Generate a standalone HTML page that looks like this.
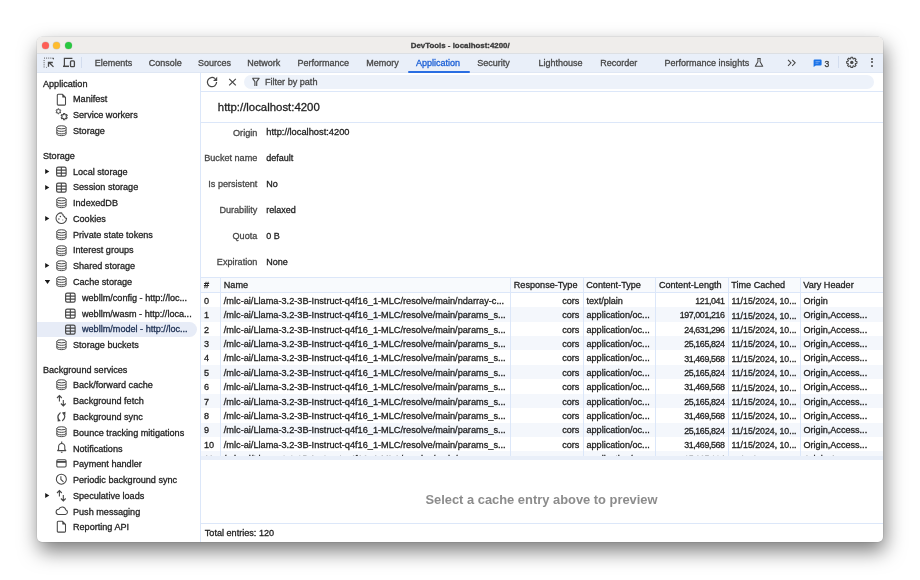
<!DOCTYPE html>
<html><head><meta charset="utf-8"><style>
html,body{margin:0;padding:0;}
body{width:920px;height:580px;background:#fff;position:relative;overflow:hidden;font-family:"Liberation Sans",sans-serif;}
#ui{position:absolute;left:0;top:0;width:920px;height:580px;will-change:transform;}
.t{position:absolute;white-space:pre;line-height:normal;-webkit-text-stroke:0.3px currentColor;}
.r{position:absolute;}
#win{position:absolute;left:37px;top:37px;width:846px;height:505px;border-radius:5px;background:#fff;box-shadow:0 0 0 0.5px rgba(0,0,0,0.1),2px 9px 20px rgba(0,0,0,0.52);}
</style></head><body>
<div id="win"></div>
<div id="ui">
<div class="r" style="left:37px;top:37px;width:846px;height:16px;background:#efedeb;border-radius:5px 5px 0 0;"></div>
<div class="r" style="left:37.00px;top:52.70px;width:846.00px;height:0.80px;background:#dcdfe3;"></div>
<div class="r" style="left:41.5px;top:41.5px;width:7px;height:7px;border-radius:50%;background:#fe5f57;box-shadow:0 0 0 0.4px rgba(0,0,0,0.15);"></div>
<div class="r" style="left:53.1px;top:41.5px;width:7px;height:7px;border-radius:50%;background:#febc2e;box-shadow:0 0 0 0.4px rgba(0,0,0,0.15);"></div>
<div class="r" style="left:64.5px;top:41.5px;width:7px;height:7px;border-radius:50%;background:#28c840;box-shadow:0 0 0 0.4px rgba(0,0,0,0.15);"></div>
<div class="t" style="left:460.20px;transform:translateX(-50%);top:40.85px;font-size:7.9px;color:#3a3a3a;font-weight:bold;">DevTools - localhost:4200/</div>
<div class="r" style="left:37.00px;top:53.50px;width:846.00px;height:18.80px;background:#e9eff9;"></div>
<div class="r" style="left:37.00px;top:72.20px;width:846.00px;height:0.80px;background:#dfe7f4;"></div>
<div class="t" style="left:94.8px;top:57.655px;font-size:9px;color:#474747;">Elements</div>
<div class="t" style="left:148.7px;top:57.655px;font-size:9px;color:#474747;">Console</div>
<div class="t" style="left:197.9px;top:57.655px;font-size:9px;color:#474747;">Sources</div>
<div class="t" style="left:247.3px;top:57.655px;font-size:9px;color:#474747;">Network</div>
<div class="t" style="left:297.5px;top:57.655px;font-size:9px;color:#474747;">Performance</div>
<div class="t" style="left:366.3px;top:57.655px;font-size:9px;color:#474747;">Memory</div>
<div class="t" style="left:415.9px;top:57.655px;font-size:9px;color:#1b5fd6;">Application</div>
<div class="t" style="left:477.2px;top:57.655px;font-size:9px;color:#474747;">Security</div>
<div class="t" style="left:538.5px;top:57.655px;font-size:9px;color:#474747;">Lighthouse</div>
<div class="t" style="left:600.3px;top:57.655px;font-size:9px;color:#474747;">Recorder</div>
<div class="t" style="left:664.6px;top:57.655px;font-size:9px;color:#474747;">Performance insights</div>
<div class="r" style="left:407.70px;top:71.00px;width:62.00px;height:1.80px;background:#2a6ee2;border-radius:1px;"></div>
<svg class="r" style="left:42.00px;top:56.00px;" width="14" height="14" viewBox="0 0 14 14"><path d="M2.1 2.1h.9 M4.2 2.1h.9 M6.3 2.1h.9 M8.4 2.1h.9 M10.5 2.1h.9v1.2 M2.1 4.2v.9 M2.1 6.3v.9 M2.1 8.4v.9 M2.1 10.5v.9 M4.2 11.4h.6" stroke="#474747" stroke-width="1"/><path d="M11.5 10.9L6.8 6.2 M6.5 10.8V6.5h4.3" fill="none" stroke="#474747" stroke-width="1.3"/></svg>
<svg class="r" style="left:62.00px;top:56.00px;" width="14" height="14" viewBox="0 0 14 14"><path d="M2.4 10V2.4h8" fill="none" stroke="#474747" stroke-width="1.2"/><path d="M1 10.3h6" stroke="#474747" stroke-width="1.5"/><rect x="8.5" y="4.9" width="3.9" height="5.8" rx="1" fill="none" stroke="#474747" stroke-width="1.3"/></svg>
<div class="r" style="left:81.30px;top:56.50px;width:0.80px;height:11.50px;background:#d3ddee;"></div>
<svg class="r" style="left:753.00px;top:56.00px;" width="12" height="12" viewBox="0 0 12 12"><path d="M4.3 2.4h3.4 M4.9 2.4v3.3L2.3 10.2h7.4L7.1 5.7V2.4" fill="none" stroke="#474747" stroke-width="1.05" stroke-linejoin="round"/></svg>
<svg class="r" style="left:786.00px;top:57.00px;" width="12" height="12" viewBox="0 0 12 12"><path d="M2 2.8l3 3-3 3 M6.2 2.8l3 3-3 3" fill="none" stroke="#474747" stroke-width="1.05"/></svg>
<svg class="r" style="left:812.00px;top:58.00px;" width="12" height="12" viewBox="0 0 12 12"><path d="M2.6 1.6h6q1 0 1 1v3.8q0 1-1 1H3.8L1.6 9V2.6q0-1 1-1z" fill="#1a73e8"/><path d="M3.5 3.6h4.4 M3.5 5.2h3" stroke="#8fb6f3" stroke-width=".7"/></svg>
<div class="t" style="left:824.50px;top:58.82px;font-size:8.6px;color:#3c3c3c;font-weight:normal;">3</div>
<div class="r" style="left:837.70px;top:56.30px;width:0.80px;height:11.40px;background:#d3ddee;"></div>
<svg class="r" style="left:845.00px;top:56.00px;" width="14" height="14" viewBox="0 0 14 14"><path d="M5.65 2.67 L5.95 1.27 L7.65 1.27 L7.95 2.67 L8.62 2.95 L9.82 2.17 L11.03 3.38 L10.25 4.58 L10.53 5.25 L11.93 5.55 L11.93 7.25 L10.53 7.55 L10.25 8.22 L11.03 9.42 L9.82 10.63 L8.62 9.85 L7.95 10.13 L7.65 11.53 L5.95 11.53 L5.65 10.13 L4.98 9.85 L3.78 10.63 L2.57 9.42 L3.35 8.22 L3.07 7.55 L1.67 7.25 L1.67 5.55 L3.07 5.25 L3.35 4.58 L2.57 3.38 L3.78 2.17 L4.98 2.95z" fill="none" stroke="#474747" stroke-width="1.1" stroke-linejoin="round"/><circle cx="6.8" cy="6.4" r="1.7" fill="#474747"/></svg>
<div class="r" style="left:871px;top:58.2px;width:2px;height:2px;border-radius:50%;background:#474747;"></div>
<div class="r" style="left:871px;top:61.4px;width:2px;height:2px;border-radius:50%;background:#474747;"></div>
<div class="r" style="left:871px;top:64.6px;width:2px;height:2px;border-radius:50%;background:#474747;"></div>
<div class="r" style="left:200.00px;top:73.00px;width:0.80px;height:469.00px;background:#dce7f9;"></div>
<div class="t" style="left:43.00px;top:78.96px;font-size:9.1px;color:#1f1f1f;font-weight:normal;">Application</div>
<svg class="r" style="left:55.00px;top:92.50px;" width="14" height="14" viewBox="0 0 14 14"><path d="M3.2 1.3h4.3l3 3v6.9q0 .9-.9 .9H3.2q-.9 0-.9-.9V2.2q0-.9 .9-.9z" fill="none" stroke="#474747" stroke-width="1.05" stroke-linejoin="round"/><path d="M7.3 1.2L10.6 4.5H7.3z" fill="#474747"/></svg>
<div class="t" style="left:73.00px;top:94.26px;font-size:9.1px;color:#1f1f1f;font-weight:normal;">Manifest</div>
<svg class="r" style="left:55.00px;top:108.27px;" width="14" height="14" viewBox="0 0 14 14"><path d="M2.84 1.80 L2.86 0.86 L3.94 0.86 L3.96 1.80 L4.41 2.06 L5.25 1.62 L5.78 2.54 L4.98 3.04 L4.98 3.56 L5.78 4.06 L5.25 4.98 L4.41 4.54 L3.96 4.80 L3.94 5.74 L2.86 5.74 L2.84 4.80 L2.39 4.54 L1.55 4.98 L1.02 4.06 L1.82 3.56 L1.82 3.04 L1.02 2.54 L1.55 1.62 L2.39 2.06z" fill="none" stroke="#474747" stroke-width="1" stroke-linejoin="round"/><path d="M8.50 6.62 L8.55 5.47 L9.85 5.47 L9.90 6.62 L10.56 7.00 L11.59 6.47 L12.24 7.59 L11.26 8.22 L11.26 8.98 L12.24 9.61 L11.59 10.73 L10.56 10.20 L9.90 10.58 L9.85 11.73 L8.55 11.73 L8.50 10.58 L7.84 10.20 L6.81 10.73 L6.16 9.61 L7.14 8.98 L7.14 8.22 L6.16 7.59 L6.81 6.47 L7.84 7.00z" fill="none" stroke="#474747" stroke-width="1.05" stroke-linejoin="round"/></svg>
<div class="t" style="left:73.00px;top:110.03px;font-size:9.1px;color:#1f1f1f;font-weight:normal;">Service workers</div>
<svg class="r" style="left:55.00px;top:124.04px;" width="14" height="14" viewBox="0 0 14 14"><ellipse cx="6.45" cy="3.3" rx="4.6" ry="1.55" fill="none" stroke="#474747" stroke-width="1"/><path d="M1.85 3.3v6.8c0 .85 2.05 1.55 4.6 1.55s4.6-.7 4.6-1.55V3.3 M1.85 5.8c0 .85 2.05 1.55 4.6 1.55s4.6-.7 4.6-1.55 M1.85 8.3c0 .85 2.05 1.55 4.6 1.55s4.6-.7 4.6-1.55" fill="none" stroke="#474747" stroke-width="1"/></svg>
<div class="t" style="left:73.00px;top:125.80px;font-size:9.1px;color:#1f1f1f;font-weight:normal;">Storage</div>
<div class="t" style="left:43.00px;top:150.76px;font-size:9.1px;color:#1f1f1f;font-weight:normal;">Storage</div>
<svg class="r" style="left:45.00px;top:167.87px;" width="6" height="8" viewBox="0 0 6 8"><path d="M0.2 1.0L4.3 3.55 0.2 6.1z" fill="#1a1a1a"/></svg>
<svg class="r" style="left:55.00px;top:164.87px;" width="14" height="14" viewBox="0 0 14 14"><rect x="1.6" y="2.1" width="9.5" height="9.0" rx="1.6" fill="none" stroke="#474747" stroke-width="1.15"/><path d="M1.6 5.1h9.5 M1.6 8.1h9.5 M6.35 2.1v9.0" stroke="#474747" stroke-width="1.1"/></svg>
<div class="t" style="left:73.00px;top:166.63px;font-size:9.1px;color:#1f1f1f;font-weight:normal;">Local storage</div>
<svg class="r" style="left:45.00px;top:183.64px;" width="6" height="8" viewBox="0 0 6 8"><path d="M0.2 1.0L4.3 3.55 0.2 6.1z" fill="#1a1a1a"/></svg>
<svg class="r" style="left:55.00px;top:180.64px;" width="14" height="14" viewBox="0 0 14 14"><rect x="1.6" y="2.1" width="9.5" height="9.0" rx="1.6" fill="none" stroke="#474747" stroke-width="1.15"/><path d="M1.6 5.1h9.5 M1.6 8.1h9.5 M6.35 2.1v9.0" stroke="#474747" stroke-width="1.1"/></svg>
<div class="t" style="left:73.00px;top:182.40px;font-size:9.1px;color:#1f1f1f;font-weight:normal;">Session storage</div>
<svg class="r" style="left:55.00px;top:196.41px;" width="14" height="14" viewBox="0 0 14 14"><ellipse cx="6.45" cy="3.3" rx="4.6" ry="1.55" fill="none" stroke="#474747" stroke-width="1"/><path d="M1.85 3.3v6.8c0 .85 2.05 1.55 4.6 1.55s4.6-.7 4.6-1.55V3.3 M1.85 5.8c0 .85 2.05 1.55 4.6 1.55s4.6-.7 4.6-1.55 M1.85 8.3c0 .85 2.05 1.55 4.6 1.55s4.6-.7 4.6-1.55" fill="none" stroke="#474747" stroke-width="1"/></svg>
<div class="t" style="left:73.00px;top:198.17px;font-size:9.1px;color:#1f1f1f;font-weight:normal;">IndexedDB</div>
<svg class="r" style="left:45.00px;top:215.18px;" width="6" height="8" viewBox="0 0 6 8"><path d="M0.2 1.0L4.3 3.55 0.2 6.1z" fill="#1a1a1a"/></svg>
<svg class="r" style="left:55.00px;top:212.18px;" width="14" height="14" viewBox="0 0 14 14"><path d="M6.8 0.9A5.3 5.3 0 1 0 11.6 6.3 1.7 1.7 0 0 1 9.6 4.5 1.7 1.7 0 0 1 8 2.6 1.6 1.6 0 0 1 6.8 0.9z" fill="none" stroke="#474747" stroke-width="1.05" stroke-linejoin="round"/><circle cx="5.4" cy="4.4" r=".75" fill="#474747"/><circle cx="3.9" cy="7.1" r=".75" fill="#474747"/><circle cx="7.8" cy="7.9" r=".6" fill="#8a8a8a"/></svg>
<div class="t" style="left:73.00px;top:213.94px;font-size:9.1px;color:#1f1f1f;font-weight:normal;">Cookies</div>
<svg class="r" style="left:55.00px;top:227.95px;" width="14" height="14" viewBox="0 0 14 14"><ellipse cx="6.45" cy="3.3" rx="4.6" ry="1.55" fill="none" stroke="#474747" stroke-width="1"/><path d="M1.85 3.3v6.8c0 .85 2.05 1.55 4.6 1.55s4.6-.7 4.6-1.55V3.3 M1.85 5.8c0 .85 2.05 1.55 4.6 1.55s4.6-.7 4.6-1.55 M1.85 8.3c0 .85 2.05 1.55 4.6 1.55s4.6-.7 4.6-1.55" fill="none" stroke="#474747" stroke-width="1"/></svg>
<div class="t" style="left:73.00px;top:229.71px;font-size:9.1px;color:#1f1f1f;font-weight:normal;">Private state tokens</div>
<svg class="r" style="left:55.00px;top:243.72px;" width="14" height="14" viewBox="0 0 14 14"><ellipse cx="6.45" cy="3.3" rx="4.6" ry="1.55" fill="none" stroke="#474747" stroke-width="1"/><path d="M1.85 3.3v6.8c0 .85 2.05 1.55 4.6 1.55s4.6-.7 4.6-1.55V3.3 M1.85 5.8c0 .85 2.05 1.55 4.6 1.55s4.6-.7 4.6-1.55 M1.85 8.3c0 .85 2.05 1.55 4.6 1.55s4.6-.7 4.6-1.55" fill="none" stroke="#474747" stroke-width="1"/></svg>
<div class="t" style="left:73.00px;top:245.48px;font-size:9.1px;color:#1f1f1f;font-weight:normal;">Interest groups</div>
<svg class="r" style="left:45.00px;top:262.49px;" width="6" height="8" viewBox="0 0 6 8"><path d="M0.2 1.0L4.3 3.55 0.2 6.1z" fill="#1a1a1a"/></svg>
<svg class="r" style="left:55.00px;top:259.49px;" width="14" height="14" viewBox="0 0 14 14"><ellipse cx="6.45" cy="3.3" rx="4.6" ry="1.55" fill="none" stroke="#474747" stroke-width="1"/><path d="M1.85 3.3v6.8c0 .85 2.05 1.55 4.6 1.55s4.6-.7 4.6-1.55V3.3 M1.85 5.8c0 .85 2.05 1.55 4.6 1.55s4.6-.7 4.6-1.55 M1.85 8.3c0 .85 2.05 1.55 4.6 1.55s4.6-.7 4.6-1.55" fill="none" stroke="#474747" stroke-width="1"/></svg>
<div class="t" style="left:73.00px;top:261.25px;font-size:9.1px;color:#1f1f1f;font-weight:normal;">Shared storage</div>
<svg class="r" style="left:45.00px;top:278.26px;" width="6" height="8" viewBox="0 0 6 8"><path d="M-0.2 1.9L5.2 1.9 2.5 6.1z" fill="#1a1a1a"/></svg>
<svg class="r" style="left:55.00px;top:275.26px;" width="14" height="14" viewBox="0 0 14 14"><ellipse cx="6.45" cy="3.3" rx="4.6" ry="1.55" fill="none" stroke="#474747" stroke-width="1"/><path d="M1.85 3.3v6.8c0 .85 2.05 1.55 4.6 1.55s4.6-.7 4.6-1.55V3.3 M1.85 5.8c0 .85 2.05 1.55 4.6 1.55s4.6-.7 4.6-1.55 M1.85 8.3c0 .85 2.05 1.55 4.6 1.55s4.6-.7 4.6-1.55" fill="none" stroke="#474747" stroke-width="1"/></svg>
<div class="t" style="left:73.00px;top:277.02px;font-size:9.1px;color:#1f1f1f;font-weight:normal;">Cache storage</div>
<svg class="r" style="left:64.00px;top:291.03px;" width="14" height="14" viewBox="0 0 14 14"><rect x="1.6" y="2.1" width="9.5" height="9.0" rx="1.6" fill="none" stroke="#474747" stroke-width="1.15"/><path d="M1.6 5.1h9.5 M1.6 8.1h9.5 M6.35 2.1v9.0" stroke="#474747" stroke-width="1.1"/></svg>
<div class="t" style="left:82.00px;top:292.79px;font-size:9.1px;color:#1f1f1f;font-weight:normal;">webllm/config - http://loc...</div>
<svg class="r" style="left:64.00px;top:306.80px;" width="14" height="14" viewBox="0 0 14 14"><rect x="1.6" y="2.1" width="9.5" height="9.0" rx="1.6" fill="none" stroke="#474747" stroke-width="1.15"/><path d="M1.6 5.1h9.5 M1.6 8.1h9.5 M6.35 2.1v9.0" stroke="#474747" stroke-width="1.1"/></svg>
<div class="t" style="left:82.00px;top:308.56px;font-size:9.1px;color:#1f1f1f;font-weight:normal;">webllm/wasm - http://loca...</div>
<div class="r" style="left:37px;top:322.07px;width:160px;height:15.2px;background:#e7ecf7;border-radius:0 7.6px 7.6px 0;"></div>
<svg class="r" style="left:64.00px;top:322.57px;" width="14" height="14" viewBox="0 0 14 14"><rect x="1.6" y="2.1" width="9.5" height="9.0" rx="1.6" fill="none" stroke="#474747" stroke-width="1.15"/><path d="M1.6 5.1h9.5 M1.6 8.1h9.5 M6.35 2.1v9.0" stroke="#474747" stroke-width="1.1"/></svg>
<div class="t" style="left:82.00px;top:324.33px;font-size:9.1px;color:#1c2f52;font-weight:normal;">webllm/model - http://loc...</div>
<svg class="r" style="left:55.00px;top:338.34px;" width="14" height="14" viewBox="0 0 14 14"><ellipse cx="6.45" cy="3.3" rx="4.6" ry="1.55" fill="none" stroke="#474747" stroke-width="1"/><path d="M1.85 3.3v6.8c0 .85 2.05 1.55 4.6 1.55s4.6-.7 4.6-1.55V3.3 M1.85 5.8c0 .85 2.05 1.55 4.6 1.55s4.6-.7 4.6-1.55 M1.85 8.3c0 .85 2.05 1.55 4.6 1.55s4.6-.7 4.6-1.55" fill="none" stroke="#474747" stroke-width="1"/></svg>
<div class="t" style="left:73.00px;top:340.10px;font-size:9.1px;color:#1f1f1f;font-weight:normal;">Storage buckets</div>
<div class="t" style="left:43.00px;top:364.70px;font-size:9.1px;color:#1f1f1f;font-weight:normal;">Background services</div>
<svg class="r" style="left:55.00px;top:378.11px;" width="14" height="14" viewBox="0 0 14 14"><ellipse cx="6.45" cy="3.3" rx="4.6" ry="1.55" fill="none" stroke="#474747" stroke-width="1"/><path d="M1.85 3.3v6.8c0 .85 2.05 1.55 4.6 1.55s4.6-.7 4.6-1.55V3.3 M1.85 5.8c0 .85 2.05 1.55 4.6 1.55s4.6-.7 4.6-1.55 M1.85 8.3c0 .85 2.05 1.55 4.6 1.55s4.6-.7 4.6-1.55" fill="none" stroke="#474747" stroke-width="1"/></svg>
<div class="t" style="left:73.00px;top:380.47px;font-size:9.1px;color:#1f1f1f;font-weight:normal;">Back/forward cache</div>
<svg class="r" style="left:55.00px;top:393.88px;" width="14" height="14" viewBox="0 0 14 14"><path d="M4.4 7.6V1.6 M2 4l2.4-2.4L6.8 4 M8.3 5.9v6 M5.9 9.5l2.4 2.4 2.4-2.4" fill="none" stroke="#474747" stroke-width="1.1"/></svg>
<div class="t" style="left:73.00px;top:396.24px;font-size:9.1px;color:#1f1f1f;font-weight:normal;">Background fetch</div>
<svg class="r" style="left:55.00px;top:409.65px;" width="14" height="14" viewBox="0 0 14 14"><path d="M5.2 2.9Q1.2 6.6 4.2 10.2 M8.0 3.1Q11.8 6.8 7.6 10.5" fill="none" stroke="#474747" stroke-width="1.2" stroke-linecap="round"/><path d="M2.8 8.4L6.0 10.9 2.6 11.6z M10.3 5.0L7.0 2.4 10.5 1.8z" fill="#474747"/></svg>
<div class="t" style="left:73.00px;top:412.01px;font-size:9.1px;color:#1f1f1f;font-weight:normal;">Background sync</div>
<svg class="r" style="left:55.00px;top:425.42px;" width="14" height="14" viewBox="0 0 14 14"><ellipse cx="6.45" cy="3.3" rx="4.6" ry="1.55" fill="none" stroke="#474747" stroke-width="1"/><path d="M1.85 3.3v6.8c0 .85 2.05 1.55 4.6 1.55s4.6-.7 4.6-1.55V3.3 M1.85 5.8c0 .85 2.05 1.55 4.6 1.55s4.6-.7 4.6-1.55 M1.85 8.3c0 .85 2.05 1.55 4.6 1.55s4.6-.7 4.6-1.55" fill="none" stroke="#474747" stroke-width="1"/></svg>
<div class="t" style="left:73.00px;top:427.78px;font-size:9.1px;color:#1f1f1f;font-weight:normal;">Bounce tracking mitigations</div>
<svg class="r" style="left:55.00px;top:441.19px;" width="14" height="14" viewBox="0 0 14 14"><path d="M2.6 9.6h8.2l-1-1.2V5.5a3.1 3.1 0 0 0-6.2 0v2.9z" fill="none" stroke="#474747" stroke-width="1.05" stroke-linejoin="round"/><path d="M6.7 0.6v1.3 M5.9 11.3h1.6" stroke="#474747" stroke-width="1.1"/></svg>
<div class="t" style="left:73.00px;top:443.55px;font-size:9.1px;color:#1f1f1f;font-weight:normal;">Notifications</div>
<svg class="r" style="left:55.00px;top:456.96px;" width="14" height="14" viewBox="0 0 14 14"><rect x="1.8" y="2.8" width="9.3" height="7.2" rx="1.2" fill="none" stroke="#474747" stroke-width="1.05"/><path d="M1.8 4.9h9.3" stroke="#474747" stroke-width="1.8"/></svg>
<div class="t" style="left:73.00px;top:459.32px;font-size:9.1px;color:#1f1f1f;font-weight:normal;">Payment handler</div>
<svg class="r" style="left:55.00px;top:472.73px;" width="14" height="14" viewBox="0 0 14 14"><circle cx="6.35" cy="6.2" r="5.0" fill="none" stroke="#474747" stroke-width="1.05"/><path d="M5.9 3.3v3.2l2.6 2.4" fill="none" stroke="#474747" stroke-width="1.05"/></svg>
<div class="t" style="left:73.00px;top:475.09px;font-size:9.1px;color:#1f1f1f;font-weight:normal;">Periodic background sync</div>
<svg class="r" style="left:45.00px;top:492.10px;" width="6" height="8" viewBox="0 0 6 8"><path d="M0.2 1.0L4.3 3.55 0.2 6.1z" fill="#1a1a1a"/></svg>
<svg class="r" style="left:55.00px;top:488.50px;" width="14" height="14" viewBox="0 0 14 14"><path d="M4.4 7.6V1.6 M2 4l2.4-2.4L6.8 4 M8.3 5.9v6 M5.9 9.5l2.4 2.4 2.4-2.4" fill="none" stroke="#474747" stroke-width="1.1"/></svg>
<div class="t" style="left:73.00px;top:490.86px;font-size:9.1px;color:#1f1f1f;font-weight:normal;">Speculative loads</div>
<svg class="r" style="left:55.00px;top:504.27px;" width="14" height="14" viewBox="0 0 14 14"><path d="M3 10.4h7.4a2.3 2.3 0 0 0 .4-4.5 3.7 3.7 0 0 0-7-.6A2.6 2.6 0 0 0 3 10.4z" fill="none" stroke="#474747" stroke-width="1.05" stroke-linejoin="round"/></svg>
<div class="t" style="left:73.00px;top:506.63px;font-size:9.1px;color:#1f1f1f;font-weight:normal;">Push messaging</div>
<svg class="r" style="left:55.00px;top:520.04px;" width="14" height="14" viewBox="0 0 14 14"><path d="M3.2 1.3h4.3l3 3v6.9q0 .9-.9 .9H3.2q-.9 0-.9-.9V2.2q0-.9 .9-.9z" fill="none" stroke="#474747" stroke-width="1.05" stroke-linejoin="round"/><path d="M7.3 1.2L10.6 4.5H7.3z" fill="#474747"/></svg>
<div class="t" style="left:73.00px;top:522.40px;font-size:9.1px;color:#1f1f1f;font-weight:normal;">Reporting API</div>
<div class="r" style="left:200.80px;top:90.60px;width:682.20px;height:0.80px;background:#dce7f9;"></div>
<svg class="r" style="left:205.00px;top:75.00px;" width="14" height="14" viewBox="0 0 14 14"><path d="M11.6 7.1A4.6 4.6 0 1 1 10 3.6" fill="none" stroke="#474747" stroke-width="1.25"/><path d="M12.2 1.8v4.1H8.1z" fill="#474747"/></svg>
<svg class="r" style="left:226.00px;top:75.00px;" width="14" height="14" viewBox="0 0 14 14"><path d="M3.2 3.8l6.6 6.6 M9.8 3.8l-6.6 6.6" stroke="#474747" stroke-width="1.2"/></svg>
<div class="r" style="left:243.8px;top:74.9px;width:630px;height:14.2px;border-radius:7.1px;background:#edf2fa;"></div>
<svg class="r" style="left:250.00px;top:75.00px;" width="14" height="14" viewBox="0 0 14 14"><path d="M2.4 3.2h6.8L6.7 6.6v4.4 M2.4 3.2L4.9 6.6v4.4" fill="none" stroke="#474747" stroke-width="1.1" stroke-linejoin="round"/></svg>
<div class="t" style="left:264.90px;top:76.76px;font-size:9.1px;color:#474747;font-weight:normal;">Filter by path</div>
<div class="t" style="left:217.80px;top:100.68px;font-size:11.4px;color:#1f1f1f;font-weight:normal;">http://localhost:4200</div>
<div class="r" style="left:200.80px;top:121.90px;width:682.20px;height:0.80px;background:#dce7f9;"></div>
<div class="t" style="right:662.70px;top:127.56px;font-size:9.1px;color:#474747;font-weight:normal;">Origin</div>
<div class="t" style="left:266.30px;top:127.38px;font-size:9.3px;color:#1f1f1f;font-weight:normal;">http://localhost:4200</div>
<div class="t" style="right:662.70px;top:153.36px;font-size:9.1px;color:#474747;font-weight:normal;">Bucket name</div>
<div class="t" style="left:266.30px;top:153.46px;font-size:9px;color:#1f1f1f;font-weight:normal;">default</div>
<div class="t" style="right:662.70px;top:179.16px;font-size:9.1px;color:#474747;font-weight:normal;">Is persistent</div>
<div class="t" style="left:266.30px;top:179.25px;font-size:9px;color:#1f1f1f;font-weight:normal;">No</div>
<div class="t" style="right:662.70px;top:204.96px;font-size:9.1px;color:#474747;font-weight:normal;">Durability</div>
<div class="t" style="left:266.30px;top:205.06px;font-size:9px;color:#1f1f1f;font-weight:normal;">relaxed</div>
<div class="t" style="right:662.70px;top:230.76px;font-size:9.1px;color:#474747;font-weight:normal;">Quota</div>
<div class="t" style="left:266.30px;top:230.85px;font-size:9px;color:#1f1f1f;font-weight:normal;">0 B</div>
<div class="t" style="right:662.70px;top:256.56px;font-size:9.1px;color:#474747;font-weight:normal;">Expiration</div>
<div class="t" style="left:266.30px;top:256.66px;font-size:9px;color:#1f1f1f;font-weight:normal;">None</div>
<div class="r" style="left:200.80px;top:276.90px;width:682.20px;height:0.80px;background:#dce7f9;"></div>
<div class="r" style="left:200.80px;top:277.70px;width:682.20px;height:14.40px;background:#f8fafd;"></div>
<div class="r" style="left:200.80px;top:292.10px;width:682.20px;height:0.80px;background:#dce7f9;"></div>
<div class="t" style="left:204.10px;top:280.06px;font-size:9.1px;color:#1f1f1f;font-weight:normal;">#</div>
<div class="t" style="left:223.80px;top:280.06px;font-size:9.1px;color:#1f1f1f;font-weight:normal;">Name</div>
<div class="t" style="left:513.80px;top:280.06px;font-size:9.1px;color:#1f1f1f;font-weight:normal;">Response-Type</div>
<div class="t" style="left:586.30px;top:280.06px;font-size:9.1px;color:#1f1f1f;font-weight:normal;">Content-Type</div>
<div class="t" style="left:658.90px;top:280.06px;font-size:9.1px;color:#1f1f1f;font-weight:normal;">Content-Length</div>
<div class="t" style="left:731.30px;top:280.06px;font-size:9.1px;color:#1f1f1f;font-weight:normal;">Time Cached</div>
<div class="t" style="left:803.30px;top:280.06px;font-size:9.1px;color:#1f1f1f;font-weight:normal;">Vary Header</div>
<div class="r" style="left:200.80px;top:307.30px;width:682.20px;height:14.40px;background:#f4f7fc;"></div>
<div class="r" style="left:200.80px;top:336.10px;width:682.20px;height:14.40px;background:#f4f7fc;"></div>
<div class="r" style="left:200.80px;top:364.90px;width:682.20px;height:14.40px;background:#f4f7fc;"></div>
<div class="r" style="left:200.80px;top:393.70px;width:682.20px;height:14.40px;background:#f4f7fc;"></div>
<div class="r" style="left:200.80px;top:422.50px;width:682.20px;height:14.40px;background:#f4f7fc;"></div>
<div class="r" style="left:200.80px;top:451.30px;width:682.20px;height:4.60px;background:#f4f7fc;"></div>
<div class="r" style="left:220.10px;top:277.70px;width:0.80px;height:178.20px;background:#dce7f9;"></div>
<div class="r" style="left:510.10px;top:277.70px;width:0.80px;height:178.20px;background:#dce7f9;"></div>
<div class="r" style="left:582.60px;top:277.70px;width:0.80px;height:178.20px;background:#dce7f9;"></div>
<div class="r" style="left:655.20px;top:277.70px;width:0.80px;height:178.20px;background:#dce7f9;"></div>
<div class="r" style="left:727.60px;top:277.70px;width:0.80px;height:178.20px;background:#dce7f9;"></div>
<div class="r" style="left:799.60px;top:277.70px;width:0.80px;height:178.20px;background:#dce7f9;"></div>
<div class="t" style="left:204.00px;top:295.86px;font-size:9.1px;color:#1f1f1f;font-weight:normal;">0</div>
<div class="t" style="left:223.80px;top:295.77px;font-size:9.2px;color:#1f1f1f;font-weight:normal;">/mlc-ai/Llama-3.2-3B-Instruct-q4f16_1-MLC/resolve/main/ndarray-c...</div>
<div class="t" style="right:340.70px;top:295.86px;font-size:9.1px;color:#1f1f1f;font-weight:normal;">cors</div>
<div class="t" style="left:586.50px;top:295.86px;font-size:9.1px;color:#1f1f1f;font-weight:normal;">text/plain</div>
<div class="t" style="right:195.40px;top:296.05px;font-size:8.9px;color:#1f1f1f;font-weight:normal;letter-spacing:-0.4px;">121,041</div>
<div class="t" style="left:731.50px;top:296.18px;font-size:8.75px;color:#1f1f1f;font-weight:normal;">11/15/2024, 10...</div>
<div class="t" style="left:803.50px;top:295.86px;font-size:9.1px;color:#1f1f1f;font-weight:normal;">Origin</div>
<div class="t" style="left:204.00px;top:310.26px;font-size:9.1px;color:#1f1f1f;font-weight:normal;">1</div>
<div class="t" style="left:223.80px;top:310.17px;font-size:9.2px;color:#1f1f1f;font-weight:normal;">/mlc-ai/Llama-3.2-3B-Instruct-q4f16_1-MLC/resolve/main/params_s...</div>
<div class="t" style="right:340.70px;top:310.26px;font-size:9.1px;color:#1f1f1f;font-weight:normal;">cors</div>
<div class="t" style="left:586.50px;top:310.26px;font-size:9.1px;color:#1f1f1f;font-weight:normal;">application/oc...</div>
<div class="t" style="right:195.40px;top:310.45px;font-size:8.9px;color:#1f1f1f;font-weight:normal;letter-spacing:-0.4px;">197,001,216</div>
<div class="t" style="left:731.50px;top:310.58px;font-size:8.75px;color:#1f1f1f;font-weight:normal;">11/15/2024, 10...</div>
<div class="t" style="left:803.50px;top:310.26px;font-size:9.1px;color:#1f1f1f;font-weight:normal;">Origin,Access...</div>
<div class="t" style="left:204.00px;top:324.66px;font-size:9.1px;color:#1f1f1f;font-weight:normal;">2</div>
<div class="t" style="left:223.80px;top:324.57px;font-size:9.2px;color:#1f1f1f;font-weight:normal;">/mlc-ai/Llama-3.2-3B-Instruct-q4f16_1-MLC/resolve/main/params_s...</div>
<div class="t" style="right:340.70px;top:324.66px;font-size:9.1px;color:#1f1f1f;font-weight:normal;">cors</div>
<div class="t" style="left:586.50px;top:324.66px;font-size:9.1px;color:#1f1f1f;font-weight:normal;">application/oc...</div>
<div class="t" style="right:195.40px;top:324.85px;font-size:8.9px;color:#1f1f1f;font-weight:normal;letter-spacing:-0.4px;">24,631,296</div>
<div class="t" style="left:731.50px;top:324.98px;font-size:8.75px;color:#1f1f1f;font-weight:normal;">11/15/2024, 10...</div>
<div class="t" style="left:803.50px;top:324.66px;font-size:9.1px;color:#1f1f1f;font-weight:normal;">Origin,Access...</div>
<div class="t" style="left:204.00px;top:339.06px;font-size:9.1px;color:#1f1f1f;font-weight:normal;">3</div>
<div class="t" style="left:223.80px;top:338.97px;font-size:9.2px;color:#1f1f1f;font-weight:normal;">/mlc-ai/Llama-3.2-3B-Instruct-q4f16_1-MLC/resolve/main/params_s...</div>
<div class="t" style="right:340.70px;top:339.06px;font-size:9.1px;color:#1f1f1f;font-weight:normal;">cors</div>
<div class="t" style="left:586.50px;top:339.06px;font-size:9.1px;color:#1f1f1f;font-weight:normal;">application/oc...</div>
<div class="t" style="right:195.40px;top:339.25px;font-size:8.9px;color:#1f1f1f;font-weight:normal;letter-spacing:-0.4px;">25,165,824</div>
<div class="t" style="left:731.50px;top:339.38px;font-size:8.75px;color:#1f1f1f;font-weight:normal;">11/15/2024, 10...</div>
<div class="t" style="left:803.50px;top:339.06px;font-size:9.1px;color:#1f1f1f;font-weight:normal;">Origin,Access...</div>
<div class="t" style="left:204.00px;top:353.46px;font-size:9.1px;color:#1f1f1f;font-weight:normal;">4</div>
<div class="t" style="left:223.80px;top:353.37px;font-size:9.2px;color:#1f1f1f;font-weight:normal;">/mlc-ai/Llama-3.2-3B-Instruct-q4f16_1-MLC/resolve/main/params_s...</div>
<div class="t" style="right:340.70px;top:353.46px;font-size:9.1px;color:#1f1f1f;font-weight:normal;">cors</div>
<div class="t" style="left:586.50px;top:353.46px;font-size:9.1px;color:#1f1f1f;font-weight:normal;">application/oc...</div>
<div class="t" style="right:195.40px;top:353.65px;font-size:8.9px;color:#1f1f1f;font-weight:normal;letter-spacing:-0.4px;">31,469,568</div>
<div class="t" style="left:731.50px;top:353.78px;font-size:8.75px;color:#1f1f1f;font-weight:normal;">11/15/2024, 10...</div>
<div class="t" style="left:803.50px;top:353.46px;font-size:9.1px;color:#1f1f1f;font-weight:normal;">Origin,Access...</div>
<div class="t" style="left:204.00px;top:367.86px;font-size:9.1px;color:#1f1f1f;font-weight:normal;">5</div>
<div class="t" style="left:223.80px;top:367.77px;font-size:9.2px;color:#1f1f1f;font-weight:normal;">/mlc-ai/Llama-3.2-3B-Instruct-q4f16_1-MLC/resolve/main/params_s...</div>
<div class="t" style="right:340.70px;top:367.86px;font-size:9.1px;color:#1f1f1f;font-weight:normal;">cors</div>
<div class="t" style="left:586.50px;top:367.86px;font-size:9.1px;color:#1f1f1f;font-weight:normal;">application/oc...</div>
<div class="t" style="right:195.40px;top:368.05px;font-size:8.9px;color:#1f1f1f;font-weight:normal;letter-spacing:-0.4px;">25,165,824</div>
<div class="t" style="left:731.50px;top:368.18px;font-size:8.75px;color:#1f1f1f;font-weight:normal;">11/15/2024, 10...</div>
<div class="t" style="left:803.50px;top:367.86px;font-size:9.1px;color:#1f1f1f;font-weight:normal;">Origin,Access...</div>
<div class="t" style="left:204.00px;top:382.26px;font-size:9.1px;color:#1f1f1f;font-weight:normal;">6</div>
<div class="t" style="left:223.80px;top:382.17px;font-size:9.2px;color:#1f1f1f;font-weight:normal;">/mlc-ai/Llama-3.2-3B-Instruct-q4f16_1-MLC/resolve/main/params_s...</div>
<div class="t" style="right:340.70px;top:382.26px;font-size:9.1px;color:#1f1f1f;font-weight:normal;">cors</div>
<div class="t" style="left:586.50px;top:382.26px;font-size:9.1px;color:#1f1f1f;font-weight:normal;">application/oc...</div>
<div class="t" style="right:195.40px;top:382.45px;font-size:8.9px;color:#1f1f1f;font-weight:normal;letter-spacing:-0.4px;">31,469,568</div>
<div class="t" style="left:731.50px;top:382.58px;font-size:8.75px;color:#1f1f1f;font-weight:normal;">11/15/2024, 10...</div>
<div class="t" style="left:803.50px;top:382.26px;font-size:9.1px;color:#1f1f1f;font-weight:normal;">Origin,Access...</div>
<div class="t" style="left:204.00px;top:396.66px;font-size:9.1px;color:#1f1f1f;font-weight:normal;">7</div>
<div class="t" style="left:223.80px;top:396.57px;font-size:9.2px;color:#1f1f1f;font-weight:normal;">/mlc-ai/Llama-3.2-3B-Instruct-q4f16_1-MLC/resolve/main/params_s...</div>
<div class="t" style="right:340.70px;top:396.66px;font-size:9.1px;color:#1f1f1f;font-weight:normal;">cors</div>
<div class="t" style="left:586.50px;top:396.66px;font-size:9.1px;color:#1f1f1f;font-weight:normal;">application/oc...</div>
<div class="t" style="right:195.40px;top:396.85px;font-size:8.9px;color:#1f1f1f;font-weight:normal;letter-spacing:-0.4px;">25,165,824</div>
<div class="t" style="left:731.50px;top:396.98px;font-size:8.75px;color:#1f1f1f;font-weight:normal;">11/15/2024, 10...</div>
<div class="t" style="left:803.50px;top:396.66px;font-size:9.1px;color:#1f1f1f;font-weight:normal;">Origin,Access...</div>
<div class="t" style="left:204.00px;top:411.06px;font-size:9.1px;color:#1f1f1f;font-weight:normal;">8</div>
<div class="t" style="left:223.80px;top:410.97px;font-size:9.2px;color:#1f1f1f;font-weight:normal;">/mlc-ai/Llama-3.2-3B-Instruct-q4f16_1-MLC/resolve/main/params_s...</div>
<div class="t" style="right:340.70px;top:411.06px;font-size:9.1px;color:#1f1f1f;font-weight:normal;">cors</div>
<div class="t" style="left:586.50px;top:411.06px;font-size:9.1px;color:#1f1f1f;font-weight:normal;">application/oc...</div>
<div class="t" style="right:195.40px;top:411.25px;font-size:8.9px;color:#1f1f1f;font-weight:normal;letter-spacing:-0.4px;">31,469,568</div>
<div class="t" style="left:731.50px;top:411.38px;font-size:8.75px;color:#1f1f1f;font-weight:normal;">11/15/2024, 10...</div>
<div class="t" style="left:803.50px;top:411.06px;font-size:9.1px;color:#1f1f1f;font-weight:normal;">Origin,Access...</div>
<div class="t" style="left:204.00px;top:425.46px;font-size:9.1px;color:#1f1f1f;font-weight:normal;">9</div>
<div class="t" style="left:223.80px;top:425.37px;font-size:9.2px;color:#1f1f1f;font-weight:normal;">/mlc-ai/Llama-3.2-3B-Instruct-q4f16_1-MLC/resolve/main/params_s...</div>
<div class="t" style="right:340.70px;top:425.46px;font-size:9.1px;color:#1f1f1f;font-weight:normal;">cors</div>
<div class="t" style="left:586.50px;top:425.46px;font-size:9.1px;color:#1f1f1f;font-weight:normal;">application/oc...</div>
<div class="t" style="right:195.40px;top:425.65px;font-size:8.9px;color:#1f1f1f;font-weight:normal;letter-spacing:-0.4px;">25,165,824</div>
<div class="t" style="left:731.50px;top:425.78px;font-size:8.75px;color:#1f1f1f;font-weight:normal;">11/15/2024, 10...</div>
<div class="t" style="left:803.50px;top:425.46px;font-size:9.1px;color:#1f1f1f;font-weight:normal;">Origin,Access...</div>
<div class="t" style="left:204.00px;top:439.86px;font-size:9.1px;color:#1f1f1f;font-weight:normal;">10</div>
<div class="t" style="left:223.80px;top:439.77px;font-size:9.2px;color:#1f1f1f;font-weight:normal;">/mlc-ai/Llama-3.2-3B-Instruct-q4f16_1-MLC/resolve/main/params_s...</div>
<div class="t" style="right:340.70px;top:439.86px;font-size:9.1px;color:#1f1f1f;font-weight:normal;">cors</div>
<div class="t" style="left:586.50px;top:439.86px;font-size:9.1px;color:#1f1f1f;font-weight:normal;">application/oc...</div>
<div class="t" style="right:195.40px;top:440.05px;font-size:8.9px;color:#1f1f1f;font-weight:normal;letter-spacing:-0.4px;">31,469,568</div>
<div class="t" style="left:731.50px;top:440.18px;font-size:8.75px;color:#1f1f1f;font-weight:normal;">11/15/2024, 10...</div>
<div class="t" style="left:803.50px;top:439.86px;font-size:9.1px;color:#1f1f1f;font-weight:normal;">Origin,Access...</div>
<div class="t" style="left:204.00px;top:454.26px;font-size:9.1px;color:#1f1f1f;font-weight:normal;">11</div>
<div class="t" style="left:223.80px;top:454.17px;font-size:9.2px;color:#1f1f1f;font-weight:normal;">/mlc-ai/Llama-3.2-3B-Instruct-q4f16_1-MLC/resolve/main/params_s...</div>
<div class="t" style="right:340.70px;top:454.26px;font-size:9.1px;color:#1f1f1f;font-weight:normal;">cors</div>
<div class="t" style="left:586.50px;top:454.26px;font-size:9.1px;color:#1f1f1f;font-weight:normal;">application/oc...</div>
<div class="t" style="right:195.40px;top:454.45px;font-size:8.9px;color:#1f1f1f;font-weight:normal;letter-spacing:-0.4px;">25,165,824</div>
<div class="t" style="left:731.50px;top:454.58px;font-size:8.75px;color:#1f1f1f;font-weight:normal;">11/15/2024, 10...</div>
<div class="t" style="left:803.50px;top:454.26px;font-size:9.1px;color:#1f1f1f;font-weight:normal;">Origin,Access...</div>
<div class="r" style="left:200.80px;top:455.90px;width:682.20px;height:67.10px;background:#fff;"></div>
<div class="r" style="left:200.80px;top:455.90px;width:682.20px;height:3.80px;background:#e9eff9;"></div>
<div class="t" style="left:541.50px;transform:translateX(-50%);top:491.93px;font-size:12.9px;color:#8c8c8c;font-weight:bold;-webkit-text-stroke:0;">Select a cache entry above to preview</div>
<div class="r" style="left:200.80px;top:522.60px;width:682.20px;height:0.80px;background:#dce7f9;"></div>
<div class="t" style="left:204.80px;top:527.76px;font-size:9.1px;color:#1f1f1f;font-weight:normal;">Total entries: 120</div>
</div></body></html>
